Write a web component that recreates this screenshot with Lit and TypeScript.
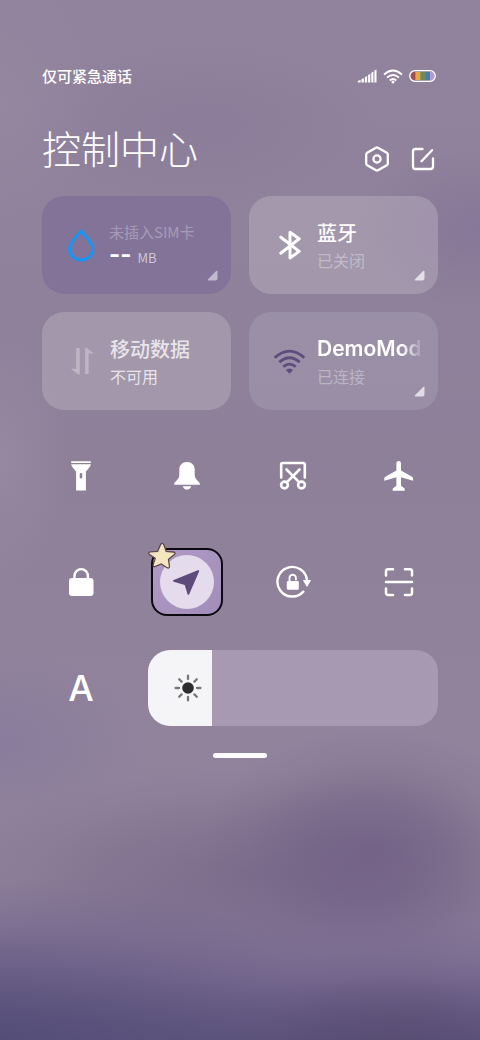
import { LitElement, html, css, svg } from "lit";
import { customElement, state } from "lit/decorators.js";
import { classMap } from "lit/directives/class-map.js";
import { styleMap } from "lit/directives/style-map.js";

interface Shortcut {
  id: string;
  label: string;
  active?: boolean;
}

const stroke = (paths: unknown, size: number, width: number) => html`<svg
  width=${size}
  height=${size}
  viewBox="0 0 ${size} ${size}"
  fill="none"
  stroke="currentColor"
  stroke-width=${width}
  stroke-linecap="round"
  stroke-linejoin="round"
  aria-hidden="true"
>${paths}</svg>`;

const solid = (paths: unknown, size: number) => html`<svg
  width=${size}
  height=${size}
  viewBox="0 0 ${size} ${size}"
  fill="currentColor"
  aria-hidden="true"
>${paths}</svg>`;

const icons: Record<string, unknown> = {
  settings: stroke(
    svg`<path d="M15 2.700 23.800 7.800Q24.800 8.400 24.800 9.500V18.500Q24.800 19.600 23.800 20.200L15 25.300Q14 25.900 13 25.300L4.200 20.200Q3.200 19.600 3.200 18.500V9.500Q3.200 8.400 4.200 7.800L13 2.700Q14 2.100 15 2.700Z"/><circle cx="14" cy="14" r="3.600"/>`,
    28, 2.3),
  edit: stroke(
    svg`<path d="M13.500 4H6.500Q4 4 4 6.500V21.500Q4 24 6.500 24H21.500Q24 24 24 21.500V13.500M12.500 16.200 23 5.200"/>`,
    28, 2.3),
  drop: stroke(
    svg`<path d="M19 4.800C22 9.300 30.700 16.800 30.700 22.800A11.700 11.200 0 0 1 7.300 22.800C7.300 16.800 16 9.300 19 4.800Z"/>`,
    38, 2.8),
  bluetooth: stroke(
    svg`<path d="M10.800 11.200 29.200 25.400 20 32V6.200L29.200 12.800 10.800 27.200"/>`,
    38, 3),
  data: solid(
    svg`<path d="M13.200 6H16.700V31.500Q16.700 33 15.400 32.200L7.800 26.800H13.200ZM25.600 32H22.100V6.500Q22.100 5 23.400 5.800L31 11.500H25.600Z"/>`,
    38),
  wifi: html`<svg width="38" height="38" viewBox="0 0 38 38" fill="none" stroke="currentColor" stroke-width="2.800" aria-hidden="true">
    <path d="M4.700 15.800Q19.500 2.500 34.300 15.800M9.300 20.300Q19.500 11.300 29.700 20.300M13.300 24.800Q19.500 19.400 25.700 24.800"/>
    <path d="M15.900 28Q19.500 24.800 23.100 28L19.500 31.800Z" fill="currentColor" stroke="none"/>
  </svg>`,
  torch: solid(
    svg`<path d="M8.200 3.200H27.800V5H8.200ZM8.200 6.200H27.800Q27.500 8 26.500 9.200L22.900 13.600V32.500H13.100V13.600L9.500 9.200Q8.500 8 8.200 6.200ZM18 15Q16.700 15 16.700 16.300V19.200Q16.700 20.500 18 20.500T19.300 19.200V16.300Q19.300 15 18 15Z" fill-rule="evenodd"/>`,
    36),
  bell: solid(
    svg`<path d="M18 4C22.700 4 25.700 7.300 25.700 11.500V17.200C25.700 20 27.700 21.600 30 24.200Q31.700 26.500 30.500 26.800H5.500Q4.300 26.500 6 24.200C8.300 21.600 10.300 20 10.300 17.200V11.500C10.300 7.300 13.300 4 18 4ZM13.800 28.200H22.200Q21.200 31.600 18 31.600T13.800 28.200Z"/>`,
    36),
  screenshot: stroke(
    svg`<path d="M6.200 19.500V6.500Q6.200 5 7.700 5H28.300Q29.800 5 29.800 6.500V19.500M11.500 11.500 24 24.200M24.500 11.500 12 24.200"/><circle cx="9.500" cy="27" r="3.400"/><circle cx="26.500" cy="27" r="3.400"/>`,
    36, 2.6),
  plane: solid(
    svg`<path d="M17.700 3C19.300 3 20 4.200 20 5.500V12.500L31 18.700Q32.100 19.300 32.100 20.300V22.700L20 19.300V27.700L23 30Q23.700 30.600 23.700 31.300V32.700H11.700V31.300Q11.700 30.600 12.400 30L15.400 27.700V19.300L3.300 22.700V20.300Q3.300 19.300 4.400 18.700L15.400 12.500V5.500C15.400 4.200 16.100 3 17.700 3Z"/>`,
    36),
  lock: html`<svg width="36" height="36" viewBox="0 0 36 36" fill="currentColor" aria-hidden="true">
    <rect x="6" y="14" width="24.500" height="18" rx="3"/>
    <path d="M11.500 16V11.800A6.700 6.700 0 0 1 24.900 11.800V16" fill="none" stroke="currentColor" stroke-width="2.400"/>
  </svg>`,
  location: solid(
    svg`<path d="M28.800 6.300Q30.600 5.700 30.100 7.500L20.300 30Q19.300 31.800 18.500 30L15.700 21 4.700 17.800Q3 16.900 4.700 16.100Z"/>`,
    36),
  rotation: html`<svg width="36" height="36" viewBox="0 0 36 36" aria-hidden="true" fill="none" stroke="currentColor" stroke-width="2.400" stroke-linecap="round">
    <path d="M28.300 27.600A14.800 14.800 0 1 1 32 16.500"/>
    <path d="M28.700 16.500H35.300L32 22Z" fill="currentColor" stroke-width="1.200" stroke-linejoin="round"/>
    <rect x="11.800" y="17" width="12" height="8.800" rx="1.200" fill="currentColor" stroke="none"/>
    <path d="M14.500 17V14A3.200 3.200 0 0 1 20.900 14V15.500" stroke-width="1.900"/>
  </svg>`,
  scan: stroke(
    svg`<path d="M12 5.200H7.200Q5 5.200 5 7.400V11.500M24 5.200H28.800Q31 5.200 31 7.400V11.500M12 31H7.200Q5 31 5 28.800V24.500M24 31H28.800Q31 31 31 28.800V24.500M5 18H31"/>`,
    36, 2.5),
  sun: html`<svg width="30" height="30" viewBox="0 0 30 30" aria-hidden="true">
    <circle cx="15" cy="15" r="5.800" fill="#2d2d2f"/>
    <path d="M15 2.600V6M15 24V27.400M2.600 15H6M24 15H27.400M6.200 6.200 8.600 8.600M21.400 21.400 23.800 23.800M23.800 6.200 21.400 8.600M6.200 23.800 8.600 21.400" fill="none" stroke="#77777b" stroke-width="2.300" stroke-linecap="round"/>
  </svg>`,
};

@customElement("app-root")
export class AppRoot extends LitElement {
  @state() private brightness = 22;

  @state() private shortcuts: Shortcut[] = [
    { id: "torch", label: "手电筒" },
    { id: "bell", label: "静音" },
    { id: "screenshot", label: "截屏" },
    { id: "plane", label: "飞行模式" },
    { id: "lock", label: "锁屏" },
    { id: "location", label: "位置信息", active: true },
    { id: "rotation", label: "方向锁定" },
    { id: "scan", label: "扫一扫" },
  ];

  static styles = css`
    :host {
      display: block;
      box-sizing: border-box;
      min-height: 100vh;
      padding: 63px 42px 40px;
      color: #fff;
      font-family: "Noto Sans CJK SC", sans-serif;
      background:
        radial-gradient(36% 10% at 82% 101%, rgba(84, 72, 108, 0.7), rgba(84, 72, 108, 0.4) 40%, rgba(84, 72, 108, 0.1) 75%, transparent),
        radial-gradient(80% 15% at 0% 100%, rgba(80, 75, 118, 0.75), rgba(84, 78, 120, 0.45) 40%, rgba(84, 78, 120, 0.15) 75%, transparent),
        radial-gradient(36% 12% at 78% 82%, rgba(104, 86, 126, 0.6), rgba(104, 86, 126, 0.45) 35%, rgba(104, 86, 126, 0.12) 75%, transparent),
        radial-gradient(64% 10% at 52% 84%, rgba(108, 92, 128, 0.5), rgba(108, 92, 128, 0.3) 45%, rgba(108, 92, 128, 0.08) 80%, transparent),
        radial-gradient(30% 8% at 0% 71%, rgba(130, 118, 158, 0.5), rgba(130, 118, 158, 0.25) 50%, transparent),
        radial-gradient(14% 12% at 0% 44%, rgba(156, 142, 164, 0.6), rgba(156, 142, 164, 0.3) 50%, transparent),
        radial-gradient(26% 8% at 100% 22%, rgba(128, 110, 150, 0.55), rgba(128, 110, 150, 0.3) 50%, transparent),
        radial-gradient(36% 8% at 42% 12%, rgba(134, 120, 152, 0.45), rgba(134, 120, 152, 0.25) 50%, transparent),
        radial-gradient(20% 12% at 0% 10%, rgba(154, 140, 162, 0.5), rgba(154, 140, 162, 0.25) 50%, transparent),
        linear-gradient(#91839d 0%, #8e8099 45%, #91839c 70%, #8f809a 84%, #877898 89%, #786a90 94%, #655a83 98%, #5f557e 100%);
    }
    button {
      margin: 0;
      padding: 0;
      border: 0;
      background: none;
      color: inherit;
      font: inherit;
      text-align: left;
      cursor: pointer;
    }
    svg {
      display: block;
      flex: none;
    }
    .status {
      display: flex;
      align-items: center;
      justify-content: space-between;
      height: 24px;
      font-size: 15px;
      font-weight: 500;
    }
    .indicators {
      display: flex;
      align-items: center;
      gap: 6px;
      padding: 2px 2px 0 0;
    }
    .header {
      display: flex;
      align-items: flex-end;
      justify-content: space-between;
      margin: 32px 0 20px;
    }
    h1 {
      margin: 0;
      font-size: 39px;
      line-height: 57px;
      font-weight: 300;
    }
    .actions {
      display: flex;
      gap: 18px;
      padding: 0 1px 3px 0;
    }
    .cards {
      display: grid;
      grid-template-columns: 1fr 1fr;
      gap: 18px;
    }
    .card {
      position: relative;
      display: flex;
      align-items: center;
      gap: 9px;
      min-width: 0;
      height: 98px;
      padding: 0 18px 0 21px;
      border-radius: 22px;
      background: rgba(200, 190, 202, 0.36);
    }
    .card.usage {
      padding-left: 20px;
      background: #837399;
    }
    .card.connected {
      background: rgba(172, 166, 186, 0.38);
    }
    .usage .glyph {
      color: #0f98fa;
    }
    .connected .glyph {
      color: #5f4b7b;
    }
    .unavailable .glyph {
      color: rgba(255, 255, 255, 0.3);
    }
    .text {
      flex: 1;
      min-width: 0;
      display: flex;
      flex-direction: column;
      padding-top: 2px;
    }
    .usage .text {
      padding-top: 0;
    }
    .name {
      font-size: 20px;
      line-height: 28px;
      font-weight: 500;
      white-space: nowrap;
      overflow: hidden;
    }
    .latin {
      font-family: Inter, "Noto Sans CJK SC", sans-serif;
      font-size: 21px;
      font-weight: 600;
      mask-image: linear-gradient(90deg, #000 82%, transparent 104%);
    }
    .note {
      font-size: 16px;
      line-height: 26px;
      color: rgba(255, 255, 255, 0.36);
    }
    .unavailable .name,
    .unavailable .note {
      color: rgba(255, 255, 255, 0.76);
    }
    .usage .note {
      font-size: 15px;
      line-height: 22px;
      color: rgba(255, 255, 255, 0.3);
    }
    .amount {
      display: flex;
      align-items: baseline;
      gap: 6px;
      line-height: 24px;
    }
    .value {
      font-family: Inter, sans-serif;
      font-size: 24px;
      font-weight: 700;
    }
    .unit {
      font-size: 13px;
      color: rgba(255, 255, 255, 0.6);
    }
    .corner {
      position: absolute;
      right: 13px;
      bottom: 13px;
      opacity: 0.7;
    }
    .usage .corner {
      opacity: 0.5;
    }
    .shortcuts {
      display: grid;
      grid-template-columns: repeat(4, 1fr);
      grid-auto-rows: 76px;
      gap: 30px 28px;
      margin-top: 28px;
    }
    .shortcut {
      display: grid;
      place-items: center;
    }
    .frame {
      position: relative;
      box-sizing: border-box;
      display: grid;
      place-items: center;
      width: 72px;
      height: 68px;
      border: 2px solid #0c0a10;
      border-radius: 16px;
      background: linear-gradient(135deg, #b09bc6, #a28dba);
    }
    .disc {
      display: grid;
      place-items: center;
      width: 54px;
      height: 54px;
      border-radius: 50%;
      background: #e4dcec;
      color: #5f4b7b;
    }
    .star {
      position: absolute;
      left: -6px;
      top: -8px;
    }
    .auto {
      font-family: Inter, sans-serif;
      font-size: 36px;
      line-height: 40px;
      font-weight: 500;
      text-align: center;
    }
    .brightness {
      position: relative;
      grid-column: span 3;
      display: grid;
      align-items: center;
    }
    .brightness svg {
      position: absolute;
      left: 25px;
      pointer-events: none;
    }
    input {
      appearance: none;
      width: 100%;
      height: 100%;
      margin: 0;
      border-radius: 22px;
      background: linear-gradient(90deg, #f5f5f8 var(--level), rgba(196, 180, 204, 0.46) var(--level));
      cursor: pointer;
    }
    input::-webkit-slider-thumb {
      appearance: none;
      width: 2px;
      height: 76px;
      background: transparent;
    }
    .handle {
      display: block;
      width: 54px;
      height: 5px;
      margin: 27px auto 0;
      border-radius: 3px;
      background: #fbfafc;
    }
  `;

  private corner() {
    return html`<svg class="corner" width="11" height="11" viewBox="0 0 11 11" aria-hidden="true">
      <path d="M9.200 1Q10.500 0.300 10.500 1.800V8.500Q10.500 10.500 8.500 10.500H1.500Q0.200 10.300 1 9.200Z" fill="#fff"/>
    </svg>`;
  }

  private onBrightness(e: Event) {
    this.brightness = Number((e.target as HTMLInputElement).value);
  }

  private toggle(id: string) {
    this.shortcuts = this.shortcuts.map((s) => (s.id === id ? { ...s, active: !s.active } : s));
  }

  private renderShortcut(item: Shortcut) {
    return html`<button
      class=${classMap({ shortcut: true, active: !!item.active })}
      aria-label=${item.label}
      aria-pressed=${item.active ? "true" : "false"}
      @click=${() => this.toggle(item.id)}
    >
      ${item.active
        ? html`<span class="frame">
            <span class="disc">${icons[item.id]}</span>
            <svg class="star" width="30" height="28" viewBox="0 0 30 28" aria-hidden="true">
              <path d="M14.800 1.500Q16 1 16.800 2.800L19.200 9.300 26.500 10Q29 10.700 27.400 12.500L21.500 17.300 22.500 24.500Q22.200 26.800 20 25.700L14.200 22 8 24.600Q5.700 25 6.200 22.600L8.200 16.300 2.200 12.200Q0.800 10.200 3.300 9.800L10.700 9.300 13.500 2.800Q14 1.600 14.800 1.500Z" fill="#f6e6bf" stroke="#5c4a4c" stroke-width="1.300"/>
            </svg>
          </span>`
        : icons[item.id]}
    </button>`;
  }

  render() {
    return html`
      <div class="status">
        <span>仅可紧急通话</span>
        <div class="indicators">
          <svg width="20" height="14" viewBox="0 0 20 14" fill="#fff" aria-hidden="true">
            <path d="M0.800 12 3.600 10.700V13.500H0.800ZM4.500 10.200 6.900 9V13.500H4.500ZM7.900 8.200 10.100 7V13.500H7.900ZM11.100 6 13.300 4.800V13.500H11.100ZM14.300 3.800 16.400 2.600V13.500H14.300ZM17.400 1.500 19.500 0.500V13.500H17.400Z"/>
          </svg>
          <svg width="20" height="15" viewBox="0 0 20 15" fill="none" stroke="#fff" stroke-width="1.900" aria-hidden="true">
            <path d="M1 5.500Q10-2.500 19 5.500M4 8.600Q10 3.200 16 8.600M6.800 11.500Q10 8.700 13.200 11.500"/>
            <circle cx="10" cy="13" r="1.500" fill="#fff" stroke="none"/>
          </svg>
          <svg width="27" height="12" viewBox="0 0 27 12" aria-hidden="true">
            <path d="M6 2H5.500A4 4 0 0 0 5.500 10H6.500V2Z" fill="#a4504f"/>
            <path d="M6.500 2H11.500V10H6.500Z" fill="#e3a944"/>
            <path d="M11.500 2H16.500V10H11.500Z" fill="#6c8a5c"/>
            <path d="M16.500 2H21V10H16.500Z" fill="#4e78a8"/>
            <path d="M21 2H21.500A4 4 0 0 1 21.500 10H21Z" fill="#b39ad2"/>
            <rect x="0.700" y="0.700" width="25.600" height="10.600" rx="5.300" fill="none" stroke="#fff" stroke-width="1.300"/>
          </svg>
        </div>
      </div>

      <header class="header">
        <h1>控制中心</h1>
        <div class="actions">
          <button aria-label="设置">${icons.settings}</button>
          <button aria-label="编辑">${icons.edit}</button>
        </div>
      </header>

      <section class="cards">
        <button class="card usage">
          <span class="glyph">${icons.drop}</span>
          <span class="text">
            <span class="note">未插入SIM卡</span>
            <span class="amount"><span class="value">--</span><span class="unit">MB</span></span>
          </span>
          ${this.corner()}
        </button>
        <button class="card">
          <span class="glyph">${icons.bluetooth}</span>
          <span class="text"><span class="name">蓝牙</span><span class="note">已关闭</span></span>
          ${this.corner()}
        </button>
        <button class="card unavailable">
          <span class="glyph">${icons.data}</span>
          <span class="text"><span class="name">移动数据</span><span class="note">不可用</span></span>
        </button>
        <button class="card connected">
          <span class="glyph">${icons.wifi}</span>
          <span class="text"><span class="name latin">DemoMod</span><span class="note">已连接</span></span>
          ${this.corner()}
        </button>
      </section>

      <section class="shortcuts">
        ${this.shortcuts.map((s) => this.renderShortcut(s))}
        <button class="auto" aria-label="自动亮度">A</button>
        <label class="brightness">
          <input
            type="range"
            min="0"
            max="100"
            aria-label="亮度"
            .value=${String(this.brightness)}
            style=${styleMap({ "--level": `${this.brightness}%` })}
            @input=${this.onBrightness}
          />
          ${icons.sun}
        </label>
      </section>

      <button class="handle" aria-label="收起"></button>
    `;
  }
}
